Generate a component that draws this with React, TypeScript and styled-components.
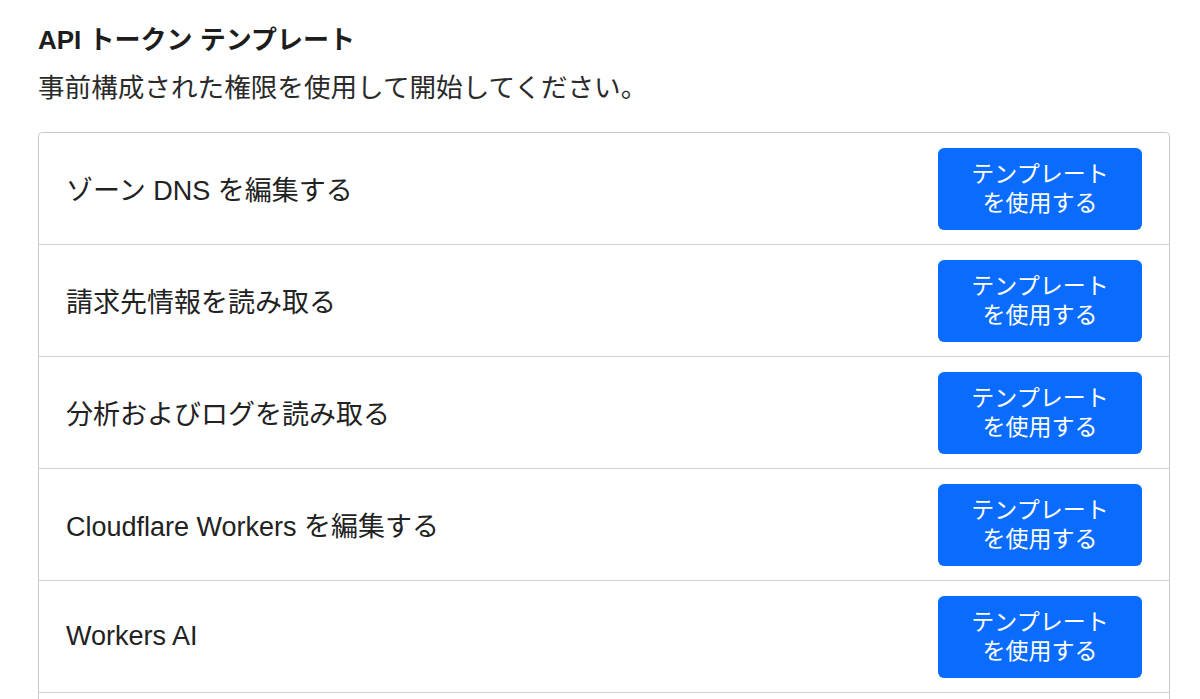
import styled, { createGlobalStyle } from "styled-components";

const GlobalStyle = createGlobalStyle`
  body {
    margin: 0;
    background: #ffffff;
    font-family: "Liberation Sans", "Noto Sans CJK JP", sans-serif;
    color: #1f1f1f;
  }
`;

const templates = [
  "ゾーン DNS を編集する",
  "請求先情報を読み取る",
  "分析およびログを読み取る",
  "Cloudflare Workers を編集する",
  "Workers AI",
  "Workers R2 ストレージを編集する",
];

const App = () => {
  return (
    <>
      <GlobalStyle />
      <Page>
        <Title>API トークン テンプレート</Title>
        <Subtitle>事前構成された権限を使用して開始してください。</Subtitle>
        <List>
          {templates.map((name) => (
            <Row key={name}>
              <RowLabel>{name}</RowLabel>
              <UseButton type="button">
                テンプレート
                <br />
                を使用する
              </UseButton>
            </Row>
          ))}
        </List>
      </Page>
    </>
  );
};

export default App;

const Page = styled.div`
  padding: 22px 30px 0 38px;
  height: 699px;
  box-sizing: border-box;
  overflow: hidden;
`;

const Title = styled.h2`
  margin: 0;
  font-size: 26px;
  line-height: 36px;
  font-weight: 700;
  color: #1d1d1d;
`;

const Subtitle = styled.p`
  margin: 12px 0 0;
  font-size: 26.6px;
  line-height: 36px;
  color: #2a2a2a;
`;

const List = styled.div`
  margin-top: 26px;
  border: 1px solid #c9c9c9;
  border-radius: 4px;
  background: #fff;
`;

const Row = styled.div`
  display: flex;
  align-items: center;
  justify-content: space-between;
  height: 111px;
  padding: 0 27px;
  border-bottom: 1px solid #d4d4d4;
`;

const RowLabel = styled.span`
  font-size: 27px;
  color: #222;
`;

const UseButton = styled.button`
  width: 204px;
  height: 82px;
  margin-top: 1px;
  border: none;
  border-radius: 6px;
  background: #0a6cff;
  color: #fff;
  font-family: "Liberation Sans", "Noto Sans CJK JP", sans-serif;
  font-size: 23px;
  line-height: 29px;
  text-align: center;
  cursor: pointer;
`;
